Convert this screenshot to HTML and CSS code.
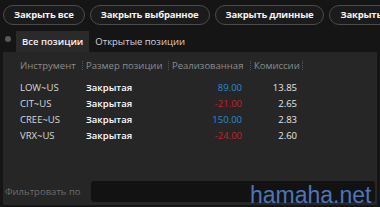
FILE: index.html
```html
<!DOCTYPE html>
<html lang="ru">
<head>
<meta charset="utf-8">
<link rel="stylesheet" href="styles.css">
</head>
<body>
<div class="toolbar">
  <button class="pill">Закрыть все</button>
  <button class="pill">Закрыть выбранное</button>
  <button class="pill">Закрыть длинные</button>
  <button class="pill">Закрыть короткие</button>
</div>
<div class="tabs">
  <span class="tab-close"></span>
  <span class="tab active">Все позиции</span>
  <span class="tab">Открытые позиции</span>
</div>
<div class="panel">
  <div class="grid">
    <div class="th"><span>Инструмент</span><i></i></div>
    <div class="th"><span>Размер позиции</span><i></i></div>
    <div class="th"><span>Реализованная</span><i></i></div>
    <div class="th"><span>Комиссии</span><i></i></div>

    <div class="td sym">LOW~US</div><div class="td st">Закрытая</div><div class="td num pos">89.00</div><div class="td num com">13.85</div>
    <div class="td sym">CIT~US</div><div class="td st">Закрытая</div><div class="td num neg">-21.00</div><div class="td num com">2.65</div>
    <div class="td sym">CREE~US</div><div class="td st">Закрытая</div><div class="td num pos">150.00</div><div class="td num com">2.83</div>
    <div class="td sym">VRX~US</div><div class="td st">Закрытая</div><div class="td num neg">-24.00</div><div class="td num com">2.60</div>
  </div>
  <div class="filter">
    <span class="flabel">Фильтровать по</span>
    <div class="finput"></div>
  </div>
</div>
<div class="watermark">hamaha.net</div>
</body>
</html>
```
FILE: styles.css
```css
* { box-sizing: border-box; }
html, body { margin: 0; padding: 0; }
body {
  width: 380px;
  height: 207px;
  overflow: hidden;
  background: #151515;
  font-family: "Open Sans", "Noto Sans", sans-serif;
  font-size: 9.5px;
  color: #e8e8e8;
  position: relative;
}
.toolbar {
  display: flex;
  gap: 5px;
  padding: 5px 0 0 3px;
  white-space: nowrap;
  overflow: hidden;
}
.pill {
  flex: none;
  height: 20px;
  padding: 0 10px;
  border: 1px solid #4b4b4b;
  border-radius: 10px;
  background: #1b1b1b;
  color: #f4f4f4;
  font-family: inherit;
  font-size: 9.5px;
  font-weight: 700;
  letter-spacing: -0.2px;
  line-height: 18px;
}
.tabs {
  display: flex;
  align-items: center;
  height: 21px;
  margin-top: 6px;
  padding-left: 5px;
}
.tab-close {
  width: 6px;
  height: 6px;
  border-radius: 50%;
  background: #5a5a5a;
  margin-right: 5px;
  align-self: flex-start;
  margin-top: 5px;
}
.tab {
  height: 21px;
  line-height: 21px;
  padding: 0 6px;
  color: #d4d0d4;
}
.tab.active {
  background: #2a2a2a;
  color: #f4f0f4;
  font-weight: 600;
}
.panel {
  margin-left: 3px;
  width: 374px;
  height: 153px;
  background: #262626;
  display: flex;
  flex-direction: column;
}
.grid {
  display: grid;
  grid-template-columns: 66px 86px 82px 52px;
  grid-template-rows: 23px repeat(4, 16px);
  padding: 5px 0 0 17px;
}
.th {
  display: flex;
  align-items: center;
  justify-content: space-between;
  align-self: start;
  color: #8c8c8c;
  height: 16px;
  white-space: nowrap;
}
.th i {
  width: 0;
  height: 9px;
  border-right: 1px dotted #555;
  margin-right: 3px;
}
.td {
  line-height: 16px;
  white-space: nowrap;
}
.sym { color: #d8d8d8; }
.st { color: #ffffff; font-weight: 600; }
.num { text-align: right; }
.pos { color: #2b8ad6; padding-right: 12px; }
.neg { color: #c81f2b; padding-right: 12px; }
.com { color: #e6e6e6; padding-right: 9px; }
.filter {
  margin-top: auto;
  display: flex;
  align-items: center;
  padding: 0 2px 3px 2px;
}
.flabel { color: #6c6c6c; width: 86px; flex: none; }
.finput {
  flex: 1;
  height: 21px;
  background: #121212;
  border-radius: 3px;
}
.watermark {
  position: absolute;
  left: 250px;
  top: 184px;
  font-family: "Liberation Sans", Arial, sans-serif;
  font-size: 23px;
  line-height: 1;
  color: #4f74b8;
}
```
